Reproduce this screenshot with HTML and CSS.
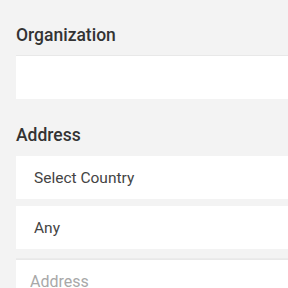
FILE: index.html
```html
<!DOCTYPE html>
<html lang="en">
<head>
  <meta charset="UTF-8" />
  <title>Organization form</title>
  <link rel="stylesheet" href="styles.css">
</head>
<body>
  <form class="form">
    <div class="field">
      <label class="label" for="org">Organization</label>
      <input class="input" type="text" id="org">
    </div>
    <div class="field">
      <label class="label">Address</label>
      <div class="stack">
        <div class="select">Select Country</div>
        <div class="select">Any</div>
        <input class="input addr" type="text" placeholder="Address">
      </div>
    </div>
  </form>
</body>
</html>
```

FILE: styles.css
```css
body {
  margin: 0;
  background: #f3f3f3;
  font-family: Roboto, "Liberation Sans", sans-serif;
  overflow: hidden;
}
.form {
  padding: 25px 0 0 16px;
  width: 320px;
}
.field {
  margin-bottom: 26px;
}
.label {
  display: block;
  font-size: 17.5px;
  line-height: 20px;
  font-weight: 500;
  color: #333;
  margin-bottom: 10px;
}
.field + .field .label {
  margin-bottom: 11px;
}
.input {
  display: block;
  box-sizing: border-box;
  width: 100%;
  height: 44px;
  border: none;
  border-top: 1px solid #e8e8e8;
  background: #fff;
  padding: 0 14px;
  font-family: inherit;
  font-size: 16px;
  color: #444;
  outline: none;
}
.input::placeholder {
  color: #a8a8a8;
}
.stack {
  display: flex;
  flex-direction: column;
  gap: 7px;
}
.select {
  height: 43px;
  background: #fff;
  box-sizing: border-box;
  padding: 0 18px;
  display: flex;
  align-items: center;
  font-size: 15.5px;
  color: #444;
}
.addr {
  margin-top: 3px;
  box-shadow: 0 -1px 0 #ebebeb;
}
```
